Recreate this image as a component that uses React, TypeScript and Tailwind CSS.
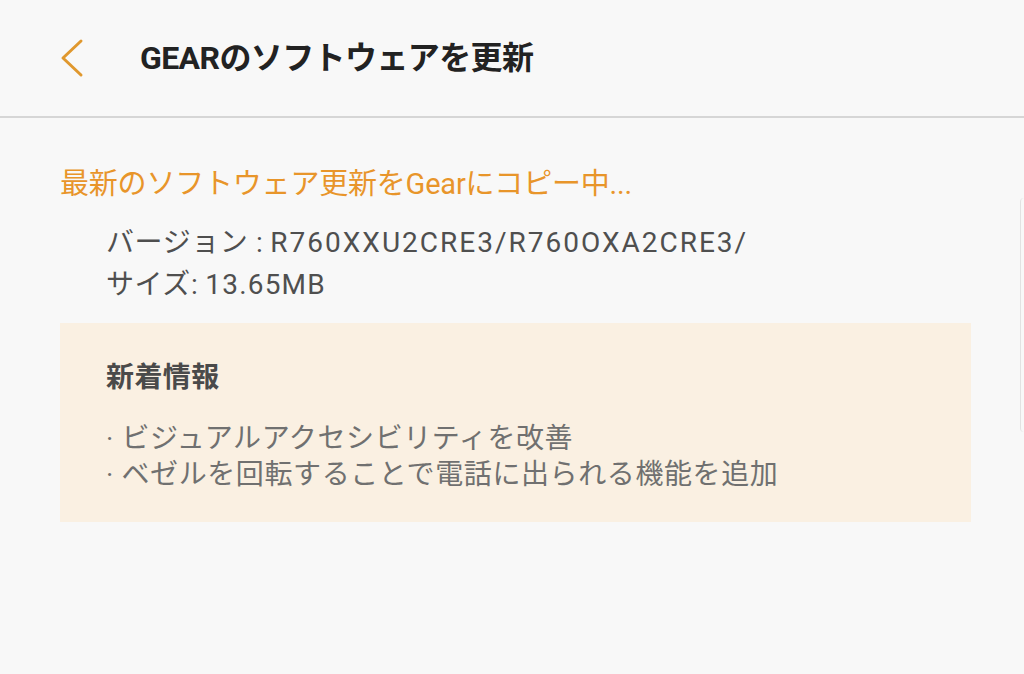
const FONT = '"Roboto", "Noto Sans CJK JP", sans-serif';

const NOTES = [
  "· ビジュアルアクセシビリティを改善",
  "· ベゼルを回転することで電話に出られる機能を追加",
];

export default function App() {
  return (
    <div className="relative h-[674px] w-[1024px] overflow-hidden bg-[#f8f8f8]" style={{ fontFamily: FONT }}>
      <header className="flex h-[118px] items-center border-b-2 border-[#d6d6d6]">
        <button className="ml-[56px] flex h-[40px] w-[32px] items-center justify-center">
          <svg width="26" height="40" viewBox="0 0 26 40" fill="none">
            <path d="M22 3 L4 20 L22 37" stroke="#e0982e" strokeWidth="3" strokeLinecap="round" strokeLinejoin="round" />
          </svg>
        </button>
        <h1 className="ml-[52px] text-[32px] font-bold tracking-[-0.6px] text-[#222]">GEARのソフトウェアを更新</h1>
      </header>

      <main className="px-[60px] pt-[46px]">
        <p className="text-[29px] leading-[40px] tracking-[-0.2px] text-[#e8952a]">最新のソフトウェア更新をGearにコピー中...</p>
        <div className="mt-[18px] pl-[46px] text-[28px] leading-[42px] text-[#4f4f4f]">
          <p>
            <span className="tracking-[0.6px]">バージョン :</span>{" "}
            <span className="tracking-[2px]">R760XXU2CRE3/R760OXA2CRE3/</span>
          </p>
          <p>
            <span className="tracking-[0.6px]">サイズ:</span> <span className="tracking-[1.2px]">13.65MB</span>
          </p>
        </div>

        <section className="mt-[17px] h-[199px] w-[911px] bg-[#faf0e2] px-[46px] pt-[35px]">
          <h2 className="text-[28px] font-bold leading-[40px] tracking-[0.4px] text-[#4a4a4a]">新着情報</h2>
          <ul className="mt-[23px] text-[28px] leading-[36px] tracking-[0.6px] text-[#707070]">
            {NOTES.map((note) => (
              <li key={note}>{note}</li>
            ))}
          </ul>
        </section>
      </main>

      <div className="absolute right-0 top-[198px] h-[234px] w-[4px] rounded-l-sm border-l border-[#e2e2e2]" />
    </div>
  );
}
